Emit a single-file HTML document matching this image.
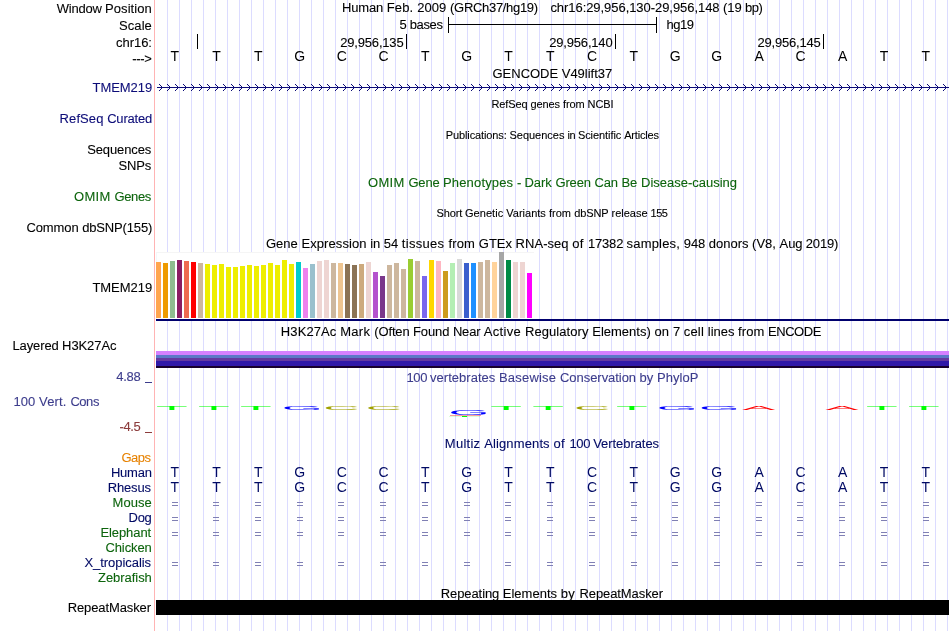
<!DOCTYPE html>
<html><head><meta charset="utf-8"><title>UCSC Genome Browser</title>
<style>
html,body{margin:0;padding:0;background:#fff;}
body{width:950px;height:631px;overflow:hidden;position:relative;font-family:"Liberation Sans",sans-serif;font-size:13px;line-height:15px;color:#000;}
#c{position:absolute;left:0;top:0;width:950px;height:631px;overflow:hidden;background:#fff;will-change:transform;}
.t{position:absolute;white-space:pre;height:15px;line-height:15px;font-size:13px;transform:scaleY(1.04);transform-origin:0 12.2px;-webkit-text-stroke:0.1px;}
.s{font-size:11px;transform:none;}
.b{position:absolute;}
.g{position:absolute;top:0;width:1px;height:631px;background:#dcdcff;}
.l{position:absolute;white-space:pre;height:15px;line-height:15px;font-size:14px;width:20px;text-align:center;}
.q{position:absolute;width:6px;height:1px;background:#8080b4;}

</style></head><body><div id="c">
<div class="g" style="left:167px"></div>
<div class="g" style="left:179px"></div>
<div class="g" style="left:191px"></div>
<div class="g" style="left:203px"></div>
<div class="g" style="left:215px"></div>
<div class="g" style="left:227px"></div>
<div class="g" style="left:239px"></div>
<div class="g" style="left:251px"></div>
<div class="g" style="left:263px"></div>
<div class="g" style="left:275px"></div>
<div class="g" style="left:287px"></div>
<div class="g" style="left:299px"></div>
<div class="g" style="left:311px"></div>
<div class="g" style="left:323px"></div>
<div class="g" style="left:335px"></div>
<div class="g" style="left:347px"></div>
<div class="g" style="left:359px"></div>
<div class="g" style="left:371px"></div>
<div class="g" style="left:383px"></div>
<div class="g" style="left:395px"></div>
<div class="g" style="left:407px"></div>
<div class="g" style="left:419px"></div>
<div class="g" style="left:431px"></div>
<div class="g" style="left:443px"></div>
<div class="g" style="left:455px"></div>
<div class="g" style="left:467px"></div>
<div class="g" style="left:479px"></div>
<div class="g" style="left:491px"></div>
<div class="g" style="left:503px"></div>
<div class="g" style="left:515px"></div>
<div class="g" style="left:527px"></div>
<div class="g" style="left:539px"></div>
<div class="g" style="left:551px"></div>
<div class="g" style="left:563px"></div>
<div class="g" style="left:575px"></div>
<div class="g" style="left:587px"></div>
<div class="g" style="left:599px"></div>
<div class="g" style="left:611px"></div>
<div class="g" style="left:623px"></div>
<div class="g" style="left:635px"></div>
<div class="g" style="left:647px"></div>
<div class="g" style="left:659px"></div>
<div class="g" style="left:671px"></div>
<div class="g" style="left:683px"></div>
<div class="g" style="left:695px"></div>
<div class="g" style="left:707px"></div>
<div class="g" style="left:719px"></div>
<div class="g" style="left:731px"></div>
<div class="g" style="left:743px"></div>
<div class="g" style="left:755px"></div>
<div class="g" style="left:767px"></div>
<div class="g" style="left:779px"></div>
<div class="g" style="left:791px"></div>
<div class="g" style="left:803px"></div>
<div class="g" style="left:815px"></div>
<div class="g" style="left:827px"></div>
<div class="g" style="left:839px"></div>
<div class="g" style="left:851px"></div>
<div class="g" style="left:863px"></div>
<div class="g" style="left:875px"></div>
<div class="g" style="left:887px"></div>
<div class="g" style="left:899px"></div>
<div class="g" style="left:911px"></div>
<div class="g" style="left:923px"></div>
<div class="g" style="left:935px"></div>
<div class="g" style="left:947px"></div>
<div class="b" style="left:154px;top:0;width:1px;height:631px;background:#ffb4b4"></div>
<div class="t" style="left:56.80px;top:1px;letter-spacing:-0.235px;">Window</div>
<div class="t" style="left:105.00px;top:1px;letter-spacing:0.083px;">Position</div>
<div class="t" style="left:119.10px;top:18px;letter-spacing:0.053px;">Scale</div>
<div class="t" style="left:116.10px;top:35px;letter-spacing:-0.064px;">chr16:</div>
<div class="t" style="left:132.30px;top:51px;letter-spacing:-0.329px;">---&gt;</div>
<div class="t" style="left:92.50px;top:80px;letter-spacing:-0.038px;color:#0c0c78;">TMEM219</div>
<div class="t" style="left:59.60px;top:111px;letter-spacing:0.090px;color:#0c0c78;">RefSeq</div>
<div class="t" style="left:107.20px;top:111px;letter-spacing:-0.203px;color:#0c0c78;">Curated</div>
<div class="t" style="left:87.20px;top:142px;letter-spacing:-0.119px;">Sequences</div>
<div class="t" style="left:118.40px;top:158px;letter-spacing:-0.110px;">SNPs</div>
<div class="t" style="left:74.00px;top:189px;letter-spacing:0.300px;color:#0c640c;">OMIM</div>
<div class="t" style="left:114.50px;top:189px;letter-spacing:-0.375px;color:#0c640c;">Genes</div>
<div class="t" style="left:26.40px;top:220px;letter-spacing:-0.078px;">Common</div>
<div class="t" style="left:82.20px;top:220px;letter-spacing:-0.157px;">dbSNP(155)</div>
<div class="t" style="left:92.40px;top:280px;letter-spacing:-0.022px;">TMEM219</div>
<div class="t" style="left:12.50px;top:338px;letter-spacing:-0.124px;">Layered</div>
<div class="t" style="left:62.10px;top:338px;letter-spacing:-0.087px;">H3K27Ac</div>
<div class="t" style="left:116.20px;top:369px;letter-spacing:-0.224px;color:#3c3c8c;">4.88</div>
<div class="t" style="left:13.50px;top:394px;letter-spacing:0.075px;color:#3c3c8c;">100</div>
<div class="t" style="left:39.10px;top:394px;letter-spacing:0.159px;color:#3c3c8c;">Vert.</div>
<div class="t" style="left:70.40px;top:394px;letter-spacing:-0.450px;color:#3c3c8c;">Cons</div>
<div class="t" style="left:119.50px;top:419px;letter-spacing:-0.357px;color:#8c3c3c;">-4.5</div>
<div class="t" style="left:121.40px;top:450px;letter-spacing:-0.450px;color:#e68200;">Gaps</div>
<div class="t" style="left:110.90px;top:465px;letter-spacing:-0.219px;color:#000a64;">Human</div>
<div class="t" style="left:107.70px;top:480px;letter-spacing:-0.156px;color:#000a64;">Rhesus</div>
<div class="t" style="left:112.60px;top:495px;letter-spacing:0.053px;color:#0c640c;">Mouse</div>
<div class="t" style="left:128.50px;top:510px;letter-spacing:-0.259px;color:#000a64;">Dog</div>
<div class="t" style="left:100.40px;top:525px;letter-spacing:-0.073px;color:#0c640c;">Elephant</div>
<div class="t" style="left:105.40px;top:540px;letter-spacing:-0.089px;color:#0c640c;">Chicken</div>
<div class="t" style="left:84.40px;top:555px;letter-spacing:-0.045px;color:#000a64;">X_tropicalis</div>
<div class="t" style="left:98.00px;top:570px;letter-spacing:-0.045px;color:#0c640c;">Zebrafish</div>
<div class="t" style="left:67.70px;top:600px;letter-spacing:-0.110px;">RepeatMasker</div>
<div class="t" style="left:341.90px;top:0px;letter-spacing:-0.120px;">Human</div>
<div class="t" style="left:386.70px;top:0px;letter-spacing:0.175px;">Feb.</div>
<div class="t" style="left:417.20px;top:0px;letter-spacing:0.074px;">2009</div>
<div class="t" style="left:450.10px;top:0px;letter-spacing:-0.312px;">(GRCh37/hg19)</div>
<div class="t" style="left:550.40px;top:0px;letter-spacing:-0.054px;">chr16:29,956,130-29,956,148</div>
<div class="t" style="left:723.10px;top:0px;letter-spacing:-0.125px;">(19</div>
<div class="t" style="left:745.00px;top:0px;letter-spacing:-0.450px;">bp)</div>
<div class="t" style="left:492.50px;top:66px;letter-spacing:-0.013px;">GENCODE V49lift37</div>
<div class="t s" style="left:491.40px;top:97px;letter-spacing:-0.093px;">RefSeq genes from NCBI</div>
<div class="t s" style="left:445.80px;top:128px;letter-spacing:-0.123px;">Publications:</div>
<div class="t s" style="left:509.50px;top:128px;letter-spacing:-0.020px;">Sequences</div>
<div class="t s" style="left:567.40px;top:128px;letter-spacing:-0.250px;">in</div>
<div class="t s" style="left:577.90px;top:128px;letter-spacing:-0.070px;">Scientific</div>
<div class="t s" style="left:624.20px;top:128px;letter-spacing:-0.195px;">Articles</div>
<div class="t" style="left:368.10px;top:175px;letter-spacing:0.261px;color:#0c640c;">OMIM</div>
<div class="t" style="left:408.40px;top:175px;letter-spacing:-0.163px;color:#0c640c;">Gene</div>
<div class="t" style="left:443.00px;top:175px;letter-spacing:0.157px;color:#0c640c;">Phenotypes</div>
<div class="t" style="left:517.00px;top:175px;letter-spacing:-0.250px;color:#0c640c;">-</div>
<div class="t" style="left:524.40px;top:175px;letter-spacing:-0.012px;color:#0c640c;">Dark</div>
<div class="t" style="left:555.40px;top:175px;letter-spacing:-0.124px;color:#0c640c;">Green</div>
<div class="t" style="left:594.40px;top:175px;letter-spacing:-0.115px;color:#0c640c;">Can</div>
<div class="t" style="left:621.40px;top:175px;letter-spacing:0.029px;color:#0c640c;">Be</div>
<div class="t" style="left:641.00px;top:175px;letter-spacing:-0.005px;color:#0c640c;">Disease-causing</div>
<div class="t s" style="left:436.60px;top:206px;letter-spacing:-0.158px;">Short</div>
<div class="t s" style="left:465.00px;top:206px;letter-spacing:0.042px;">Genetic</div>
<div class="t s" style="left:506.30px;top:206px;letter-spacing:0.001px;">Variants</div>
<div class="t s" style="left:548.90px;top:206px;letter-spacing:0.049px;">from</div>
<div class="t s" style="left:574.20px;top:206px;letter-spacing:-0.085px;">dbSNP</div>
<div class="t s" style="left:611.60px;top:206px;letter-spacing:-0.029px;">release</div>
<div class="t s" style="left:650.50px;top:206px;letter-spacing:-0.450px;">155</div>
<div class="t" style="left:266.00px;top:236px;letter-spacing:-0.003px;">Gene</div>
<div class="t" style="left:301.40px;top:236px;letter-spacing:0.089px;">Expression</div>
<div class="t" style="left:370.30px;top:236px;letter-spacing:-0.077px;">in</div>
<div class="t" style="left:383.80px;top:236px;letter-spacing:-0.024px;">54</div>
<div class="t" style="left:401.80px;top:236px;letter-spacing:0.300px;">tissues</div>
<div class="t" style="left:448.40px;top:236px;letter-spacing:0.158px;">from</div>
<div class="t" style="left:478.80px;top:236px;letter-spacing:-0.007px;">GTEx</div>
<div class="t" style="left:515.60px;top:236px;letter-spacing:0.044px;">RNA-seq</div>
<div class="t" style="left:572.30px;top:236px;letter-spacing:0.300px;">of</div>
<div class="t" style="left:588.00px;top:236px;letter-spacing:-0.194px;">17382</div>
<div class="t" style="left:626.60px;top:236px;letter-spacing:0.174px;">samples,</div>
<div class="t" style="left:683.80px;top:236px;letter-spacing:-0.075px;">948</div>
<div class="t" style="left:708.80px;top:236px;letter-spacing:-0.009px;">donors</div>
<div class="t" style="left:752.10px;top:236px;letter-spacing:0.009px;">(V8,</div>
<div class="t" style="left:779.60px;top:236px;letter-spacing:-0.136px;">Aug</div>
<div class="t" style="left:805.80px;top:236px;letter-spacing:-0.180px;">2019)</div>
<div class="t" style="left:280.80px;top:324px;letter-spacing:0.109px;">H3K27Ac</div>
<div class="t" style="left:340.20px;top:324px;letter-spacing:0.300px;">Mark</div>
<div class="t" style="left:374.30px;top:324px;letter-spacing:-0.148px;">(Often</div>
<div class="t" style="left:413.00px;top:324px;letter-spacing:-0.095px;">Found</div>
<div class="t" style="left:452.90px;top:324px;letter-spacing:-0.178px;">Near</div>
<div class="t" style="left:483.80px;top:324px;letter-spacing:0.300px;">Active</div>
<div class="t" style="left:525.00px;top:324px;letter-spacing:0.066px;">Regulatory</div>
<div class="t" style="left:592.20px;top:324px;letter-spacing:0.017px;">Elements)</div>
<div class="t" style="left:654.50px;top:324px;letter-spacing:0.143px;">on</div>
<div class="t" style="left:673.00px;top:324px;letter-spacing:-0.071px;">7</div>
<div class="t" style="left:683.70px;top:324px;letter-spacing:0.196px;">cell</div>
<div class="t" style="left:707.80px;top:324px;letter-spacing:-0.008px;">lines</div>
<div class="t" style="left:738.10px;top:324px;letter-spacing:0.058px;">from</div>
<div class="t" style="left:768.00px;top:324px;letter-spacing:-0.449px;">ENCODE</div>
<div class="t" style="left:406.40px;top:370px;letter-spacing:-0.250px;color:#3c3c8c;">100</div>
<div class="t" style="left:430.00px;top:370px;letter-spacing:0.030px;color:#3c3c8c;">vertebrates</div>
<div class="t" style="left:499.00px;top:370px;letter-spacing:0.195px;color:#3c3c8c;">Basewise</div>
<div class="t" style="left:560.00px;top:370px;letter-spacing:-0.047px;color:#3c3c8c;">Conservation</div>
<div class="t" style="left:639.60px;top:370px;letter-spacing:0.019px;color:#3c3c8c;">by</div>
<div class="t" style="left:657.00px;top:370px;letter-spacing:0.056px;color:#3c3c8c;">PhyloP</div>
<div class="t" style="left:444.80px;top:436px;letter-spacing:0.263px;color:#000a64;">Multiz</div>
<div class="t" style="left:484.20px;top:436px;letter-spacing:0.125px;color:#000a64;">Alignments</div>
<div class="t" style="left:553.50px;top:436px;letter-spacing:0.300px;color:#000a64;">of</div>
<div class="t" style="left:569.40px;top:436px;letter-spacing:-0.250px;color:#000a64;">100</div>
<div class="t" style="left:593.20px;top:436px;letter-spacing:-0.059px;color:#000a64;">Vertebrates</div>
<div class="t" style="left:440.80px;top:586px;letter-spacing:-0.098px;">Repeating</div>
<div class="t" style="left:502.70px;top:586px;letter-spacing:0.033px;">Elements</div>
<div class="t" style="left:560.80px;top:586px;letter-spacing:0.300px;">by</div>
<div class="t" style="left:579.50px;top:586px;letter-spacing:-0.092px;">RepeatMasker</div>
<div class="t" style="left:399.50px;top:17px;letter-spacing:-0.339px;">5 bases</div>
<div class="t" style="left:666.50px;top:17px;letter-spacing:-0.450px;">hg19</div>
<div class="t" style="left:340.30px;top:35px;letter-spacing:-0.193px;">29,956,135</div>
<div class="t" style="left:549.30px;top:35px;letter-spacing:-0.193px;">29,956,140</div>
<div class="t" style="left:757.50px;top:35px;letter-spacing:-0.193px;">29,956,145</div>
<div class="b" style="left:145px;top:382px;width:7px;height:1px;background:#3c3c8c"></div>
<div class="b" style="left:145px;top:432px;width:7px;height:1px;background:#8c3c3c"></div>
<div class="b" style="left:448px;top:24px;width:209px;height:1px;background:#000"></div>
<div class="b" style="left:448px;top:17px;width:1px;height:16px;background:#000"></div>
<div class="b" style="left:656px;top:17px;width:1px;height:16px;background:#000"></div>
<div class="b" style="left:197px;top:34px;width:1px;height:15px;background:#000"></div>
<div class="b" style="left:406px;top:34px;width:1px;height:15px;background:#000"></div>
<div class="b" style="left:615px;top:34px;width:1px;height:15px;background:#000"></div>
<div class="b" style="left:823px;top:34px;width:1px;height:15px;background:#000"></div>
<div class="l" style="left:164.9px;top:49px">T</div>
<div class="l" style="left:206.6px;top:49px">T</div>
<div class="l" style="left:248.3px;top:49px">T</div>
<div class="l" style="left:289.7px;top:49px">G</div>
<div class="l" style="left:331.7px;top:49px">C</div>
<div class="l" style="left:373.5px;top:49px">C</div>
<div class="l" style="left:415.2px;top:49px">T</div>
<div class="l" style="left:456.6px;top:49px">G</div>
<div class="l" style="left:498.6px;top:49px">T</div>
<div class="l" style="left:540.3px;top:49px">T</div>
<div class="l" style="left:582.0px;top:49px">C</div>
<div class="l" style="left:623.7px;top:49px">T</div>
<div class="l" style="left:665.1px;top:49px">G</div>
<div class="l" style="left:706.8px;top:49px">G</div>
<div class="l" style="left:749.1px;top:49px">A</div>
<div class="l" style="left:790.5px;top:49px">C</div>
<div class="l" style="left:832.6px;top:49px">A</div>
<div class="l" style="left:874.0px;top:49px">T</div>
<div class="l" style="left:915.7px;top:49px">T</div>
<svg class="b" style="left:0;top:80px" width="950" height="16" viewBox="0 80 950 16" shape-rendering="crispEdges"><rect x="157" y="87" width="792" height="1" fill="#0c0c78"/><path d="M161 86h1v1h-1zM161 88h1v1h-1zM160 85h1v1h-1zM160 89h1v1h-1zM159 84h1v1h-1zM159 90h1v1h-1zM169 86h1v1h-1zM169 88h1v1h-1zM168 85h1v1h-1zM168 89h1v1h-1zM167 84h1v1h-1zM167 90h1v1h-1zM177 86h1v1h-1zM177 88h1v1h-1zM176 85h1v1h-1zM176 89h1v1h-1zM175 84h1v1h-1zM175 90h1v1h-1zM185 86h1v1h-1zM185 88h1v1h-1zM184 85h1v1h-1zM184 89h1v1h-1zM183 84h1v1h-1zM183 90h1v1h-1zM193 86h1v1h-1zM193 88h1v1h-1zM192 85h1v1h-1zM192 89h1v1h-1zM191 84h1v1h-1zM191 90h1v1h-1zM201 86h1v1h-1zM201 88h1v1h-1zM200 85h1v1h-1zM200 89h1v1h-1zM199 84h1v1h-1zM199 90h1v1h-1zM209 86h1v1h-1zM209 88h1v1h-1zM208 85h1v1h-1zM208 89h1v1h-1zM207 84h1v1h-1zM207 90h1v1h-1zM217 86h1v1h-1zM217 88h1v1h-1zM216 85h1v1h-1zM216 89h1v1h-1zM215 84h1v1h-1zM215 90h1v1h-1zM225 86h1v1h-1zM225 88h1v1h-1zM224 85h1v1h-1zM224 89h1v1h-1zM223 84h1v1h-1zM223 90h1v1h-1zM233 86h1v1h-1zM233 88h1v1h-1zM232 85h1v1h-1zM232 89h1v1h-1zM231 84h1v1h-1zM231 90h1v1h-1zM241 86h1v1h-1zM241 88h1v1h-1zM240 85h1v1h-1zM240 89h1v1h-1zM239 84h1v1h-1zM239 90h1v1h-1zM249 86h1v1h-1zM249 88h1v1h-1zM248 85h1v1h-1zM248 89h1v1h-1zM247 84h1v1h-1zM247 90h1v1h-1zM257 86h1v1h-1zM257 88h1v1h-1zM256 85h1v1h-1zM256 89h1v1h-1zM255 84h1v1h-1zM255 90h1v1h-1zM265 86h1v1h-1zM265 88h1v1h-1zM264 85h1v1h-1zM264 89h1v1h-1zM263 84h1v1h-1zM263 90h1v1h-1zM273 86h1v1h-1zM273 88h1v1h-1zM272 85h1v1h-1zM272 89h1v1h-1zM271 84h1v1h-1zM271 90h1v1h-1zM281 86h1v1h-1zM281 88h1v1h-1zM280 85h1v1h-1zM280 89h1v1h-1zM279 84h1v1h-1zM279 90h1v1h-1zM289 86h1v1h-1zM289 88h1v1h-1zM288 85h1v1h-1zM288 89h1v1h-1zM287 84h1v1h-1zM287 90h1v1h-1zM297 86h1v1h-1zM297 88h1v1h-1zM296 85h1v1h-1zM296 89h1v1h-1zM295 84h1v1h-1zM295 90h1v1h-1zM305 86h1v1h-1zM305 88h1v1h-1zM304 85h1v1h-1zM304 89h1v1h-1zM303 84h1v1h-1zM303 90h1v1h-1zM313 86h1v1h-1zM313 88h1v1h-1zM312 85h1v1h-1zM312 89h1v1h-1zM311 84h1v1h-1zM311 90h1v1h-1zM321 86h1v1h-1zM321 88h1v1h-1zM320 85h1v1h-1zM320 89h1v1h-1zM319 84h1v1h-1zM319 90h1v1h-1zM329 86h1v1h-1zM329 88h1v1h-1zM328 85h1v1h-1zM328 89h1v1h-1zM327 84h1v1h-1zM327 90h1v1h-1zM337 86h1v1h-1zM337 88h1v1h-1zM336 85h1v1h-1zM336 89h1v1h-1zM335 84h1v1h-1zM335 90h1v1h-1zM345 86h1v1h-1zM345 88h1v1h-1zM344 85h1v1h-1zM344 89h1v1h-1zM343 84h1v1h-1zM343 90h1v1h-1zM353 86h1v1h-1zM353 88h1v1h-1zM352 85h1v1h-1zM352 89h1v1h-1zM351 84h1v1h-1zM351 90h1v1h-1zM361 86h1v1h-1zM361 88h1v1h-1zM360 85h1v1h-1zM360 89h1v1h-1zM359 84h1v1h-1zM359 90h1v1h-1zM369 86h1v1h-1zM369 88h1v1h-1zM368 85h1v1h-1zM368 89h1v1h-1zM367 84h1v1h-1zM367 90h1v1h-1zM377 86h1v1h-1zM377 88h1v1h-1zM376 85h1v1h-1zM376 89h1v1h-1zM375 84h1v1h-1zM375 90h1v1h-1zM385 86h1v1h-1zM385 88h1v1h-1zM384 85h1v1h-1zM384 89h1v1h-1zM383 84h1v1h-1zM383 90h1v1h-1zM393 86h1v1h-1zM393 88h1v1h-1zM392 85h1v1h-1zM392 89h1v1h-1zM391 84h1v1h-1zM391 90h1v1h-1zM401 86h1v1h-1zM401 88h1v1h-1zM400 85h1v1h-1zM400 89h1v1h-1zM399 84h1v1h-1zM399 90h1v1h-1zM409 86h1v1h-1zM409 88h1v1h-1zM408 85h1v1h-1zM408 89h1v1h-1zM407 84h1v1h-1zM407 90h1v1h-1zM417 86h1v1h-1zM417 88h1v1h-1zM416 85h1v1h-1zM416 89h1v1h-1zM415 84h1v1h-1zM415 90h1v1h-1zM425 86h1v1h-1zM425 88h1v1h-1zM424 85h1v1h-1zM424 89h1v1h-1zM423 84h1v1h-1zM423 90h1v1h-1zM433 86h1v1h-1zM433 88h1v1h-1zM432 85h1v1h-1zM432 89h1v1h-1zM431 84h1v1h-1zM431 90h1v1h-1zM441 86h1v1h-1zM441 88h1v1h-1zM440 85h1v1h-1zM440 89h1v1h-1zM439 84h1v1h-1zM439 90h1v1h-1zM449 86h1v1h-1zM449 88h1v1h-1zM448 85h1v1h-1zM448 89h1v1h-1zM447 84h1v1h-1zM447 90h1v1h-1zM457 86h1v1h-1zM457 88h1v1h-1zM456 85h1v1h-1zM456 89h1v1h-1zM455 84h1v1h-1zM455 90h1v1h-1zM465 86h1v1h-1zM465 88h1v1h-1zM464 85h1v1h-1zM464 89h1v1h-1zM463 84h1v1h-1zM463 90h1v1h-1zM473 86h1v1h-1zM473 88h1v1h-1zM472 85h1v1h-1zM472 89h1v1h-1zM471 84h1v1h-1zM471 90h1v1h-1zM481 86h1v1h-1zM481 88h1v1h-1zM480 85h1v1h-1zM480 89h1v1h-1zM479 84h1v1h-1zM479 90h1v1h-1zM489 86h1v1h-1zM489 88h1v1h-1zM488 85h1v1h-1zM488 89h1v1h-1zM487 84h1v1h-1zM487 90h1v1h-1zM497 86h1v1h-1zM497 88h1v1h-1zM496 85h1v1h-1zM496 89h1v1h-1zM495 84h1v1h-1zM495 90h1v1h-1zM505 86h1v1h-1zM505 88h1v1h-1zM504 85h1v1h-1zM504 89h1v1h-1zM503 84h1v1h-1zM503 90h1v1h-1zM513 86h1v1h-1zM513 88h1v1h-1zM512 85h1v1h-1zM512 89h1v1h-1zM511 84h1v1h-1zM511 90h1v1h-1zM521 86h1v1h-1zM521 88h1v1h-1zM520 85h1v1h-1zM520 89h1v1h-1zM519 84h1v1h-1zM519 90h1v1h-1zM529 86h1v1h-1zM529 88h1v1h-1zM528 85h1v1h-1zM528 89h1v1h-1zM527 84h1v1h-1zM527 90h1v1h-1zM537 86h1v1h-1zM537 88h1v1h-1zM536 85h1v1h-1zM536 89h1v1h-1zM535 84h1v1h-1zM535 90h1v1h-1zM545 86h1v1h-1zM545 88h1v1h-1zM544 85h1v1h-1zM544 89h1v1h-1zM543 84h1v1h-1zM543 90h1v1h-1zM553 86h1v1h-1zM553 88h1v1h-1zM552 85h1v1h-1zM552 89h1v1h-1zM551 84h1v1h-1zM551 90h1v1h-1zM561 86h1v1h-1zM561 88h1v1h-1zM560 85h1v1h-1zM560 89h1v1h-1zM559 84h1v1h-1zM559 90h1v1h-1zM569 86h1v1h-1zM569 88h1v1h-1zM568 85h1v1h-1zM568 89h1v1h-1zM567 84h1v1h-1zM567 90h1v1h-1zM577 86h1v1h-1zM577 88h1v1h-1zM576 85h1v1h-1zM576 89h1v1h-1zM575 84h1v1h-1zM575 90h1v1h-1zM585 86h1v1h-1zM585 88h1v1h-1zM584 85h1v1h-1zM584 89h1v1h-1zM583 84h1v1h-1zM583 90h1v1h-1zM593 86h1v1h-1zM593 88h1v1h-1zM592 85h1v1h-1zM592 89h1v1h-1zM591 84h1v1h-1zM591 90h1v1h-1zM601 86h1v1h-1zM601 88h1v1h-1zM600 85h1v1h-1zM600 89h1v1h-1zM599 84h1v1h-1zM599 90h1v1h-1zM609 86h1v1h-1zM609 88h1v1h-1zM608 85h1v1h-1zM608 89h1v1h-1zM607 84h1v1h-1zM607 90h1v1h-1zM617 86h1v1h-1zM617 88h1v1h-1zM616 85h1v1h-1zM616 89h1v1h-1zM615 84h1v1h-1zM615 90h1v1h-1zM625 86h1v1h-1zM625 88h1v1h-1zM624 85h1v1h-1zM624 89h1v1h-1zM623 84h1v1h-1zM623 90h1v1h-1zM633 86h1v1h-1zM633 88h1v1h-1zM632 85h1v1h-1zM632 89h1v1h-1zM631 84h1v1h-1zM631 90h1v1h-1zM641 86h1v1h-1zM641 88h1v1h-1zM640 85h1v1h-1zM640 89h1v1h-1zM639 84h1v1h-1zM639 90h1v1h-1zM649 86h1v1h-1zM649 88h1v1h-1zM648 85h1v1h-1zM648 89h1v1h-1zM647 84h1v1h-1zM647 90h1v1h-1zM657 86h1v1h-1zM657 88h1v1h-1zM656 85h1v1h-1zM656 89h1v1h-1zM655 84h1v1h-1zM655 90h1v1h-1zM665 86h1v1h-1zM665 88h1v1h-1zM664 85h1v1h-1zM664 89h1v1h-1zM663 84h1v1h-1zM663 90h1v1h-1zM673 86h1v1h-1zM673 88h1v1h-1zM672 85h1v1h-1zM672 89h1v1h-1zM671 84h1v1h-1zM671 90h1v1h-1zM681 86h1v1h-1zM681 88h1v1h-1zM680 85h1v1h-1zM680 89h1v1h-1zM679 84h1v1h-1zM679 90h1v1h-1zM689 86h1v1h-1zM689 88h1v1h-1zM688 85h1v1h-1zM688 89h1v1h-1zM687 84h1v1h-1zM687 90h1v1h-1zM697 86h1v1h-1zM697 88h1v1h-1zM696 85h1v1h-1zM696 89h1v1h-1zM695 84h1v1h-1zM695 90h1v1h-1zM705 86h1v1h-1zM705 88h1v1h-1zM704 85h1v1h-1zM704 89h1v1h-1zM703 84h1v1h-1zM703 90h1v1h-1zM713 86h1v1h-1zM713 88h1v1h-1zM712 85h1v1h-1zM712 89h1v1h-1zM711 84h1v1h-1zM711 90h1v1h-1zM721 86h1v1h-1zM721 88h1v1h-1zM720 85h1v1h-1zM720 89h1v1h-1zM719 84h1v1h-1zM719 90h1v1h-1zM729 86h1v1h-1zM729 88h1v1h-1zM728 85h1v1h-1zM728 89h1v1h-1zM727 84h1v1h-1zM727 90h1v1h-1zM737 86h1v1h-1zM737 88h1v1h-1zM736 85h1v1h-1zM736 89h1v1h-1zM735 84h1v1h-1zM735 90h1v1h-1zM745 86h1v1h-1zM745 88h1v1h-1zM744 85h1v1h-1zM744 89h1v1h-1zM743 84h1v1h-1zM743 90h1v1h-1zM753 86h1v1h-1zM753 88h1v1h-1zM752 85h1v1h-1zM752 89h1v1h-1zM751 84h1v1h-1zM751 90h1v1h-1zM761 86h1v1h-1zM761 88h1v1h-1zM760 85h1v1h-1zM760 89h1v1h-1zM759 84h1v1h-1zM759 90h1v1h-1zM769 86h1v1h-1zM769 88h1v1h-1zM768 85h1v1h-1zM768 89h1v1h-1zM767 84h1v1h-1zM767 90h1v1h-1zM777 86h1v1h-1zM777 88h1v1h-1zM776 85h1v1h-1zM776 89h1v1h-1zM775 84h1v1h-1zM775 90h1v1h-1zM785 86h1v1h-1zM785 88h1v1h-1zM784 85h1v1h-1zM784 89h1v1h-1zM783 84h1v1h-1zM783 90h1v1h-1zM793 86h1v1h-1zM793 88h1v1h-1zM792 85h1v1h-1zM792 89h1v1h-1zM791 84h1v1h-1zM791 90h1v1h-1zM801 86h1v1h-1zM801 88h1v1h-1zM800 85h1v1h-1zM800 89h1v1h-1zM799 84h1v1h-1zM799 90h1v1h-1zM809 86h1v1h-1zM809 88h1v1h-1zM808 85h1v1h-1zM808 89h1v1h-1zM807 84h1v1h-1zM807 90h1v1h-1zM817 86h1v1h-1zM817 88h1v1h-1zM816 85h1v1h-1zM816 89h1v1h-1zM815 84h1v1h-1zM815 90h1v1h-1zM825 86h1v1h-1zM825 88h1v1h-1zM824 85h1v1h-1zM824 89h1v1h-1zM823 84h1v1h-1zM823 90h1v1h-1zM833 86h1v1h-1zM833 88h1v1h-1zM832 85h1v1h-1zM832 89h1v1h-1zM831 84h1v1h-1zM831 90h1v1h-1zM841 86h1v1h-1zM841 88h1v1h-1zM840 85h1v1h-1zM840 89h1v1h-1zM839 84h1v1h-1zM839 90h1v1h-1zM849 86h1v1h-1zM849 88h1v1h-1zM848 85h1v1h-1zM848 89h1v1h-1zM847 84h1v1h-1zM847 90h1v1h-1zM857 86h1v1h-1zM857 88h1v1h-1zM856 85h1v1h-1zM856 89h1v1h-1zM855 84h1v1h-1zM855 90h1v1h-1zM865 86h1v1h-1zM865 88h1v1h-1zM864 85h1v1h-1zM864 89h1v1h-1zM863 84h1v1h-1zM863 90h1v1h-1zM873 86h1v1h-1zM873 88h1v1h-1zM872 85h1v1h-1zM872 89h1v1h-1zM871 84h1v1h-1zM871 90h1v1h-1zM881 86h1v1h-1zM881 88h1v1h-1zM880 85h1v1h-1zM880 89h1v1h-1zM879 84h1v1h-1zM879 90h1v1h-1zM889 86h1v1h-1zM889 88h1v1h-1zM888 85h1v1h-1zM888 89h1v1h-1zM887 84h1v1h-1zM887 90h1v1h-1zM897 86h1v1h-1zM897 88h1v1h-1zM896 85h1v1h-1zM896 89h1v1h-1zM895 84h1v1h-1zM895 90h1v1h-1zM905 86h1v1h-1zM905 88h1v1h-1zM904 85h1v1h-1zM904 89h1v1h-1zM903 84h1v1h-1zM903 90h1v1h-1zM913 86h1v1h-1zM913 88h1v1h-1zM912 85h1v1h-1zM912 89h1v1h-1zM911 84h1v1h-1zM911 90h1v1h-1zM921 86h1v1h-1zM921 88h1v1h-1zM920 85h1v1h-1zM920 89h1v1h-1zM919 84h1v1h-1zM919 90h1v1h-1zM929 86h1v1h-1zM929 88h1v1h-1zM928 85h1v1h-1zM928 89h1v1h-1zM927 84h1v1h-1zM927 90h1v1h-1zM937 86h1v1h-1zM937 88h1v1h-1zM936 85h1v1h-1zM936 89h1v1h-1zM935 84h1v1h-1zM935 90h1v1h-1zM945 86h1v1h-1zM945 88h1v1h-1zM944 85h1v1h-1zM944 89h1v1h-1zM943 84h1v1h-1zM943 90h1v1h-1z" fill="#0c0c78"/></svg>
<div class="b" style="left:156px;top:252px;width:378px;height:67px;background:#fff;box-sizing:border-box;border-top:1px solid #f5f5f5;border-left:1px solid #f3f8fa"></div>
<div class="b" style="left:156px;top:262px;width:5px;height:56px;background:#FFA54F"></div>
<div class="b" style="left:163px;top:263px;width:5px;height:55px;background:#EE9A00"></div>
<div class="b" style="left:170px;top:261px;width:5px;height:57px;background:#8FBC8F"></div>
<div class="b" style="left:177px;top:260px;width:5px;height:58px;background:#8B1C62"></div>
<div class="b" style="left:184px;top:261px;width:5px;height:57px;background:#EE6A50"></div>
<div class="b" style="left:191px;top:262px;width:5px;height:56px;background:#FF0000"></div>
<div class="b" style="left:198px;top:263px;width:5px;height:55px;background:#CDB79E"></div>
<div class="b" style="left:205px;top:264px;width:5px;height:54px;background:#EEEE00"></div>
<div class="b" style="left:212px;top:265px;width:5px;height:53px;background:#EEEE00"></div>
<div class="b" style="left:219px;top:264px;width:5px;height:54px;background:#EEEE00"></div>
<div class="b" style="left:226px;top:267px;width:5px;height:51px;background:#EEEE00"></div>
<div class="b" style="left:233px;top:267px;width:5px;height:51px;background:#EEEE00"></div>
<div class="b" style="left:240px;top:266px;width:5px;height:52px;background:#EEEE00"></div>
<div class="b" style="left:247px;top:265px;width:5px;height:53px;background:#EEEE00"></div>
<div class="b" style="left:254px;top:266px;width:5px;height:52px;background:#EEEE00"></div>
<div class="b" style="left:261px;top:265px;width:5px;height:53px;background:#EEEE00"></div>
<div class="b" style="left:268px;top:263px;width:5px;height:55px;background:#EEEE00"></div>
<div class="b" style="left:275px;top:265px;width:5px;height:53px;background:#EEEE00"></div>
<div class="b" style="left:282px;top:260px;width:5px;height:58px;background:#EEEE00"></div>
<div class="b" style="left:289px;top:264px;width:5px;height:54px;background:#EEEE00"></div>
<div class="b" style="left:296px;top:262px;width:5px;height:56px;background:#00CDCD"></div>
<div class="b" style="left:303px;top:268px;width:5px;height:50px;background:#EE82EE"></div>
<div class="b" style="left:310px;top:264px;width:5px;height:54px;background:#9AC0CD"></div>
<div class="b" style="left:317px;top:261px;width:5px;height:57px;background:#EED5D2"></div>
<div class="b" style="left:324px;top:260px;width:5px;height:58px;background:#EED5D2"></div>
<div class="b" style="left:331px;top:263px;width:5px;height:55px;background:#CDB79E"></div>
<div class="b" style="left:338px;top:263px;width:5px;height:55px;background:#EEC591"></div>
<div class="b" style="left:345px;top:264px;width:5px;height:54px;background:#8B7355"></div>
<div class="b" style="left:352px;top:265px;width:5px;height:53px;background:#8B7355"></div>
<div class="b" style="left:359px;top:264px;width:5px;height:54px;background:#CDAA7D"></div>
<div class="b" style="left:366px;top:262px;width:5px;height:56px;background:#EED5D2"></div>
<div class="b" style="left:373px;top:272px;width:5px;height:46px;background:#B452CD"></div>
<div class="b" style="left:380px;top:276px;width:5px;height:42px;background:#7A378B"></div>
<div class="b" style="left:387px;top:265px;width:5px;height:53px;background:#CDB79E"></div>
<div class="b" style="left:394px;top:263px;width:5px;height:55px;background:#CDB79E"></div>
<div class="b" style="left:401px;top:269px;width:5px;height:49px;background:#CDB79E"></div>
<div class="b" style="left:408px;top:259px;width:5px;height:59px;background:#9ACD32"></div>
<div class="b" style="left:415px;top:261px;width:5px;height:57px;background:#CDB79E"></div>
<div class="b" style="left:422px;top:276px;width:5px;height:42px;background:#7A67EE"></div>
<div class="b" style="left:429px;top:260px;width:5px;height:58px;background:#FFD700"></div>
<div class="b" style="left:436px;top:261px;width:5px;height:57px;background:#FFB6C1"></div>
<div class="b" style="left:443px;top:271px;width:5px;height:47px;background:#CD9B1D"></div>
<div class="b" style="left:450px;top:263px;width:5px;height:55px;background:#B4EEB4"></div>
<div class="b" style="left:457px;top:259px;width:5px;height:59px;background:#D9D9D9"></div>
<div class="b" style="left:464px;top:263px;width:5px;height:55px;background:#3A5FCD"></div>
<div class="b" style="left:471px;top:263px;width:5px;height:55px;background:#1E90FF"></div>
<div class="b" style="left:478px;top:262px;width:5px;height:56px;background:#CDB79E"></div>
<div class="b" style="left:485px;top:260px;width:5px;height:58px;background:#CDB79E"></div>
<div class="b" style="left:492px;top:262px;width:5px;height:56px;background:#FFD39B"></div>
<div class="b" style="left:499px;top:252px;width:5px;height:66px;background:#A6A6A6"></div>
<div class="b" style="left:506px;top:260px;width:5px;height:58px;background:#008B45"></div>
<div class="b" style="left:513px;top:262px;width:5px;height:56px;background:#EED5D2"></div>
<div class="b" style="left:520px;top:262px;width:5px;height:56px;background:#EED5D2"></div>
<div class="b" style="left:527px;top:273px;width:5px;height:45px;background:#FF00FF"></div>
<div class="b" style="left:156px;top:319px;width:793px;height:2px;background:#00006e"></div>
<div class="b" style="left:156px;top:351px;width:793px;height:4px;background:#d580ff"></div>
<div class="b" style="left:156px;top:355px;width:793px;height:3px;background:#5c78c8"></div>
<div class="b" style="left:156px;top:358px;width:793px;height:3px;background:#6438a0"></div>
<div class="b" style="left:156px;top:361px;width:793px;height:5px;background:#3018a8"></div>
<div class="b" style="left:156px;top:366px;width:793px;height:2px;background:#18002c"></div>
<svg class="b" style="left:0;top:395px;font-family:'Liberation Sans',sans-serif;font-size:50px" width="950" height="30" viewBox="0 395 950 30"><text transform="translate(156.06 409.9) scale(1.042 0.114)" fill="#00ff00">T</text><text transform="translate(197.96 409.9) scale(1.042 0.114)" fill="#00ff00">T</text><text transform="translate(240.06 409.9) scale(1.042 0.114)" fill="#00ff00">T</text><text transform="translate(281.70 409.9) scale(1.055 0.114)" fill="#0000ff">G</text><text transform="translate(323.20 409.9) scale(1.0 0.114)" fill="#a0a000">C</text><text transform="translate(365.70 409.9) scale(1.0 0.114)" fill="#a0a000">C</text><text transform="translate(448.40 414.9) scale(1.055 0.144)" fill="#0000ff">G</text><rect x="450" y="415" width="31" height="1" fill="#ff0000" opacity="0.38"/><rect x="449" y="416" width="31" height="1" fill="#00ff00" opacity="0.14"/><rect x="462" y="416" width="5" height="1" fill="#00ff00"/><text transform="translate(490.16 409.9) scale(1.042 0.114)" fill="#00ff00">T</text><text transform="translate(532.26 409.9) scale(1.042 0.114)" fill="#00ff00">T</text><text transform="translate(574.10 409.9) scale(1.0 0.114)" fill="#a0a000">C</text><text transform="translate(615.96 409.9) scale(1.042 0.114)" fill="#00ff00">T</text><text transform="translate(656.70 409.9) scale(1.055 0.114)" fill="#0000ff">G</text><text transform="translate(698.90 409.9) scale(1.055 0.114)" fill="#0000ff">G</text><text transform="translate(742.00 409.9) scale(1.0 0.114)" fill="#ff0000">A</text><text transform="translate(825.20 409.9) scale(1.0 0.114)" fill="#ff0000">A</text><text transform="translate(865.96 409.9) scale(1.042 0.114)" fill="#00ff00">T</text><text transform="translate(907.96 409.9) scale(1.042 0.114)" fill="#00ff00">T</text></svg>
<div class="l" style="left:164.9px;top:465px;color:#000a64">T</div>
<div class="l" style="left:164.9px;top:480px;color:#000a64">T</div>
<div class="q" style="left:172px;top:502px"></div><div class="q" style="left:172px;top:505px"></div>
<div class="q" style="left:172px;top:517px"></div><div class="q" style="left:172px;top:520px"></div>
<div class="q" style="left:172px;top:532px"></div><div class="q" style="left:172px;top:535px"></div>
<div class="q" style="left:172px;top:562px"></div><div class="q" style="left:172px;top:565px"></div>
<div class="l" style="left:206.6px;top:465px;color:#000a64">T</div>
<div class="l" style="left:206.6px;top:480px;color:#000a64">T</div>
<div class="q" style="left:213px;top:502px"></div><div class="q" style="left:213px;top:505px"></div>
<div class="q" style="left:213px;top:517px"></div><div class="q" style="left:213px;top:520px"></div>
<div class="q" style="left:213px;top:532px"></div><div class="q" style="left:213px;top:535px"></div>
<div class="q" style="left:213px;top:562px"></div><div class="q" style="left:213px;top:565px"></div>
<div class="l" style="left:248.3px;top:465px;color:#000a64">T</div>
<div class="l" style="left:248.3px;top:480px;color:#000a64">T</div>
<div class="q" style="left:255px;top:502px"></div><div class="q" style="left:255px;top:505px"></div>
<div class="q" style="left:255px;top:517px"></div><div class="q" style="left:255px;top:520px"></div>
<div class="q" style="left:255px;top:532px"></div><div class="q" style="left:255px;top:535px"></div>
<div class="q" style="left:255px;top:562px"></div><div class="q" style="left:255px;top:565px"></div>
<div class="l" style="left:289.7px;top:465px;color:#000a64">G</div>
<div class="l" style="left:289.7px;top:480px;color:#000a64">G</div>
<div class="q" style="left:297px;top:502px"></div><div class="q" style="left:297px;top:505px"></div>
<div class="q" style="left:297px;top:517px"></div><div class="q" style="left:297px;top:520px"></div>
<div class="q" style="left:297px;top:532px"></div><div class="q" style="left:297px;top:535px"></div>
<div class="q" style="left:297px;top:562px"></div><div class="q" style="left:297px;top:565px"></div>
<div class="l" style="left:331.7px;top:465px;color:#000a64">C</div>
<div class="l" style="left:331.7px;top:480px;color:#000a64">C</div>
<div class="q" style="left:338px;top:502px"></div><div class="q" style="left:338px;top:505px"></div>
<div class="q" style="left:338px;top:517px"></div><div class="q" style="left:338px;top:520px"></div>
<div class="q" style="left:338px;top:532px"></div><div class="q" style="left:338px;top:535px"></div>
<div class="q" style="left:338px;top:562px"></div><div class="q" style="left:338px;top:565px"></div>
<div class="l" style="left:373.5px;top:465px;color:#000a64">C</div>
<div class="l" style="left:373.5px;top:480px;color:#000a64">C</div>
<div class="q" style="left:380px;top:502px"></div><div class="q" style="left:380px;top:505px"></div>
<div class="q" style="left:380px;top:517px"></div><div class="q" style="left:380px;top:520px"></div>
<div class="q" style="left:380px;top:532px"></div><div class="q" style="left:380px;top:535px"></div>
<div class="q" style="left:380px;top:562px"></div><div class="q" style="left:380px;top:565px"></div>
<div class="l" style="left:415.2px;top:465px;color:#000a64">T</div>
<div class="l" style="left:415.2px;top:480px;color:#000a64">T</div>
<div class="q" style="left:422px;top:502px"></div><div class="q" style="left:422px;top:505px"></div>
<div class="q" style="left:422px;top:517px"></div><div class="q" style="left:422px;top:520px"></div>
<div class="q" style="left:422px;top:532px"></div><div class="q" style="left:422px;top:535px"></div>
<div class="q" style="left:422px;top:562px"></div><div class="q" style="left:422px;top:565px"></div>
<div class="l" style="left:456.6px;top:465px;color:#000a64">G</div>
<div class="l" style="left:456.6px;top:480px;color:#000a64">G</div>
<div class="q" style="left:464px;top:502px"></div><div class="q" style="left:464px;top:505px"></div>
<div class="q" style="left:464px;top:517px"></div><div class="q" style="left:464px;top:520px"></div>
<div class="q" style="left:464px;top:532px"></div><div class="q" style="left:464px;top:535px"></div>
<div class="q" style="left:464px;top:562px"></div><div class="q" style="left:464px;top:565px"></div>
<div class="l" style="left:498.6px;top:465px;color:#000a64">T</div>
<div class="l" style="left:498.6px;top:480px;color:#000a64">T</div>
<div class="q" style="left:505px;top:502px"></div><div class="q" style="left:505px;top:505px"></div>
<div class="q" style="left:505px;top:517px"></div><div class="q" style="left:505px;top:520px"></div>
<div class="q" style="left:505px;top:532px"></div><div class="q" style="left:505px;top:535px"></div>
<div class="q" style="left:505px;top:562px"></div><div class="q" style="left:505px;top:565px"></div>
<div class="l" style="left:540.3px;top:465px;color:#000a64">T</div>
<div class="l" style="left:540.3px;top:480px;color:#000a64">T</div>
<div class="q" style="left:547px;top:502px"></div><div class="q" style="left:547px;top:505px"></div>
<div class="q" style="left:547px;top:517px"></div><div class="q" style="left:547px;top:520px"></div>
<div class="q" style="left:547px;top:532px"></div><div class="q" style="left:547px;top:535px"></div>
<div class="q" style="left:547px;top:562px"></div><div class="q" style="left:547px;top:565px"></div>
<div class="l" style="left:582.0px;top:465px;color:#000a64">C</div>
<div class="l" style="left:582.0px;top:480px;color:#000a64">C</div>
<div class="q" style="left:589px;top:502px"></div><div class="q" style="left:589px;top:505px"></div>
<div class="q" style="left:589px;top:517px"></div><div class="q" style="left:589px;top:520px"></div>
<div class="q" style="left:589px;top:532px"></div><div class="q" style="left:589px;top:535px"></div>
<div class="q" style="left:589px;top:562px"></div><div class="q" style="left:589px;top:565px"></div>
<div class="l" style="left:623.7px;top:465px;color:#000a64">T</div>
<div class="l" style="left:623.7px;top:480px;color:#000a64">T</div>
<div class="q" style="left:631px;top:502px"></div><div class="q" style="left:631px;top:505px"></div>
<div class="q" style="left:631px;top:517px"></div><div class="q" style="left:631px;top:520px"></div>
<div class="q" style="left:631px;top:532px"></div><div class="q" style="left:631px;top:535px"></div>
<div class="q" style="left:631px;top:562px"></div><div class="q" style="left:631px;top:565px"></div>
<div class="l" style="left:665.1px;top:465px;color:#000a64">G</div>
<div class="l" style="left:665.1px;top:480px;color:#000a64">G</div>
<div class="q" style="left:672px;top:502px"></div><div class="q" style="left:672px;top:505px"></div>
<div class="q" style="left:672px;top:517px"></div><div class="q" style="left:672px;top:520px"></div>
<div class="q" style="left:672px;top:532px"></div><div class="q" style="left:672px;top:535px"></div>
<div class="q" style="left:672px;top:562px"></div><div class="q" style="left:672px;top:565px"></div>
<div class="l" style="left:706.8px;top:465px;color:#000a64">G</div>
<div class="l" style="left:706.8px;top:480px;color:#000a64">G</div>
<div class="q" style="left:714px;top:502px"></div><div class="q" style="left:714px;top:505px"></div>
<div class="q" style="left:714px;top:517px"></div><div class="q" style="left:714px;top:520px"></div>
<div class="q" style="left:714px;top:532px"></div><div class="q" style="left:714px;top:535px"></div>
<div class="q" style="left:714px;top:562px"></div><div class="q" style="left:714px;top:565px"></div>
<div class="l" style="left:749.1px;top:465px;color:#000a64">A</div>
<div class="l" style="left:749.1px;top:480px;color:#000a64">A</div>
<div class="q" style="left:756px;top:502px"></div><div class="q" style="left:756px;top:505px"></div>
<div class="q" style="left:756px;top:517px"></div><div class="q" style="left:756px;top:520px"></div>
<div class="q" style="left:756px;top:532px"></div><div class="q" style="left:756px;top:535px"></div>
<div class="q" style="left:756px;top:562px"></div><div class="q" style="left:756px;top:565px"></div>
<div class="l" style="left:790.5px;top:465px;color:#000a64">C</div>
<div class="l" style="left:790.5px;top:480px;color:#000a64">C</div>
<div class="q" style="left:797px;top:502px"></div><div class="q" style="left:797px;top:505px"></div>
<div class="q" style="left:797px;top:517px"></div><div class="q" style="left:797px;top:520px"></div>
<div class="q" style="left:797px;top:532px"></div><div class="q" style="left:797px;top:535px"></div>
<div class="q" style="left:797px;top:562px"></div><div class="q" style="left:797px;top:565px"></div>
<div class="l" style="left:832.6px;top:465px;color:#000a64">A</div>
<div class="l" style="left:832.6px;top:480px;color:#000a64">A</div>
<div class="q" style="left:839px;top:502px"></div><div class="q" style="left:839px;top:505px"></div>
<div class="q" style="left:839px;top:517px"></div><div class="q" style="left:839px;top:520px"></div>
<div class="q" style="left:839px;top:532px"></div><div class="q" style="left:839px;top:535px"></div>
<div class="q" style="left:839px;top:562px"></div><div class="q" style="left:839px;top:565px"></div>
<div class="l" style="left:874.0px;top:465px;color:#000a64">T</div>
<div class="l" style="left:874.0px;top:480px;color:#000a64">T</div>
<div class="q" style="left:881px;top:502px"></div><div class="q" style="left:881px;top:505px"></div>
<div class="q" style="left:881px;top:517px"></div><div class="q" style="left:881px;top:520px"></div>
<div class="q" style="left:881px;top:532px"></div><div class="q" style="left:881px;top:535px"></div>
<div class="q" style="left:881px;top:562px"></div><div class="q" style="left:881px;top:565px"></div>
<div class="l" style="left:915.7px;top:465px;color:#000a64">T</div>
<div class="l" style="left:915.7px;top:480px;color:#000a64">T</div>
<div class="q" style="left:923px;top:502px"></div><div class="q" style="left:923px;top:505px"></div>
<div class="q" style="left:923px;top:517px"></div><div class="q" style="left:923px;top:520px"></div>
<div class="q" style="left:923px;top:532px"></div><div class="q" style="left:923px;top:535px"></div>
<div class="q" style="left:923px;top:562px"></div><div class="q" style="left:923px;top:565px"></div>
<div class="b" style="left:156px;top:600px;width:793px;height:15px;background:#000"></div>
</div></body></html>
